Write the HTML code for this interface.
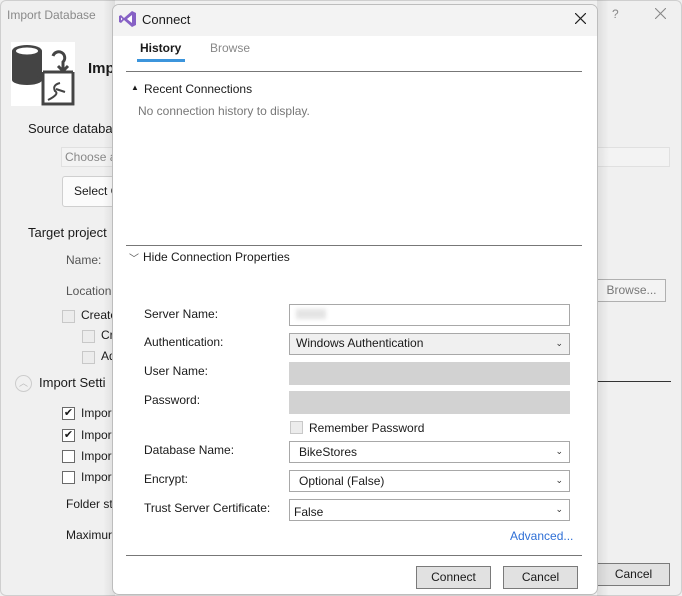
<!DOCTYPE html>
<html><head><meta charset="utf-8"><style>
*{margin:0;padding:0;box-sizing:border-box}
body{width:682px;height:596px;overflow:hidden;background:#f0f0f0;font-family:"Liberation Sans",sans-serif;font-size:12px;color:#1a1a1a;position:relative}
.a{position:absolute;white-space:nowrap}
.cb{position:absolute;width:13px;height:13px;border:1px solid #6a6a6a;background:#fff}
.cbd{border-color:#c8c8c8;background:#ececec}
.inp{position:absolute;border:1px solid #a8a8a8;background:#fff;height:22px;padding:3px 6px}
.chev{position:absolute;right:6px;top:4px;font-size:9px;color:#333}
.btn{position:absolute;border:1px solid #7a7a7a;background:#e1e1e1;text-align:center;line-height:20px}
</style></head><body>
<div class="a" style="left:0;top:0;width:682px;height:596px;border:1px solid #cfcfcf;border-radius:6px;background:#f0f0f0"></div>
<div class="a" style="left:7px;top:8px;color:#8a8a8a">Import Database</div>
<div class="a" style="left:612px;top:7px;color:#888">?</div>
<svg class="a" style="left:655px;top:8px" width="11" height="11"><path d="M0 0L11 11M11 0L0 11" stroke="#888" stroke-width="1.1"/></svg>
<div class="a" style="left:11px;top:42px;width:64px;height:64px;background:#fff">
<svg width="64" height="64"><rect x="1" y="9" width="30" height="29" fill="#444"/><ellipse cx="16" cy="38" rx="15" ry="5" fill="#444"/><ellipse cx="16" cy="9" rx="15" ry="6" fill="#444"/><ellipse cx="16" cy="9" rx="11" ry="3.5" fill="#fff"/><path d="M42 14 a6 6 0 1 1 10 6 v8 M47 24 l5 5 5-5" stroke="#444" stroke-width="3" fill="none"/><path d="M32 30 h30 M32 30 v32 h30 v-32" stroke="#444" stroke-width="3" fill="none"/><path d="M49 41 q-8 2 -5 8 q5 3 -7 9 M45 47 l9 3" stroke="#444" stroke-width="2" fill="none"/></svg></div>
<div class="a" style="left:88px;top:60px;font-weight:bold;font-size:15px">Impo</div>
<div class="a" style="left:28px;top:121px;font-size:13px">Source databa</div>
<div class="a" style="left:61px;top:147px;width:609px;height:20px;border:1px solid #e0e0e0;background:#f3f3f3;color:#888;padding:2px 3px">Choose a</div>
<div class="a" style="left:62px;top:176px;width:60px;height:31px;border:1px solid #cfcfcf;border-radius:3px;background:#fbfbfb;padding:7px 11px">Select C</div>
<div class="a" style="left:28px;top:225px;font-size:13px">Target project</div>
<div class="a" style="left:66px;top:253px;color:#555">Name:</div>
<div class="a" style="left:66px;top:284px;color:#555">Location</div>
<div class="btn" style="left:597px;top:279px;width:69px;height:23px;background:#f3f3f3;border-color:#b0b0b0;color:#777">Browse...</div>
<div class="cb cbd" style="left:62px;top:310px"></div><div class="a" style="left:81px;top:308px">Create</div>
<div class="cb cbd" style="left:82px;top:330px"></div><div class="a" style="left:101px;top:328px">Cr</div>
<div class="cb cbd" style="left:82px;top:351px"></div><div class="a" style="left:101px;top:349px">Ad</div>
<div class="a" style="left:15px;top:375px;width:17px;height:17px;border:1px solid #ccc;border-radius:50%;font-size:9px;color:#bbb;text-align:center;line-height:14px">︿</div>
<div class="a" style="left:39px;top:375px;font-size:13px">Import Setti</div>
<div class="a" style="left:597px;top:381px;width:74px;height:1px;background:#333"></div>
<div class="cb" style="left:62px;top:407px;font-size:11px;line-height:11px;text-align:center">✔</div><div class="a" style="left:81px;top:406px">Impor</div>
<div class="cb" style="left:62px;top:429px;font-size:11px;line-height:11px;text-align:center">✔</div><div class="a" style="left:81px;top:428px">Impor</div>
<div class="cb" style="left:62px;top:450px"></div><div class="a" style="left:81px;top:449px">Impor</div>
<div class="cb" style="left:62px;top:471px"></div><div class="a" style="left:81px;top:470px">Impor</div>
<div class="a" style="left:66px;top:497px">Folder st</div>
<div class="a" style="left:66px;top:528px">Maximur</div>
<div class="btn" style="left:597px;top:563px;width:73px;height:23px">Cancel</div>

<div class="a" style="left:103px;top:0;width:12px;height:596px;background:linear-gradient(90deg,rgba(0,0,0,0),rgba(0,0,0,.08))"></div>
<div class="a" style="left:597px;top:0;width:12px;height:596px;background:linear-gradient(90deg,rgba(0,0,0,.08),rgba(0,0,0,0))"></div>
<div class="a" style="left:112px;top:4px;width:486px;height:591px;background:#fff;border:1px solid #bdbdbd;border-radius:7px;overflow:hidden">
 <div class="a" style="left:0;top:0;width:486px;height:31px;background:#f3f3f3"></div>
</div>
<svg class="a" style="left:119px;top:10px" width="18" height="18" viewBox="0 0 18 18"><path d="M13 1 L17 3 V15 L13 17 L5 10 L2 13 L0 12 V6 L2 5 L5 8 Z" fill="#8661c5"/><path d="M13 5 V13 L8 9 Z" fill="#fff"/><path d="M2 7.5 V10.5 L3.5 9 Z" fill="#fff"/></svg>
<div class="a" style="left:142px;top:12px;font-size:13px">Connect</div>
<svg class="a" style="left:575px;top:13px" width="11" height="11"><path d="M0 0L11 11M11 0L0 11" stroke="#222" stroke-width="1.2"/></svg>
<div class="a" style="left:140px;top:41px;font-weight:bold">History</div>
<div class="a" style="left:137px;top:59px;width:48px;height:3px;background:#3c95dc"></div>
<div class="a" style="left:210px;top:41px;color:#888">Browse</div>
<div class="a" style="left:126px;top:71px;width:456px;height:1px;background:#777"></div>
<div class="a" style="left:131px;top:83px;font-size:8px">▲</div>
<div class="a" style="left:144px;top:82px">Recent Connections</div>
<div class="a" style="left:138px;top:104px;color:#777">No connection history to display.</div>
<div class="a" style="left:126px;top:245px;width:456px;height:1px;background:#777"></div>
<div class="a" style="left:129px;top:250px;font-size:10px;color:#555">﹀</div>
<div class="a" style="left:143px;top:250px">Hide Connection Properties</div>
<div class="a" style="left:144px;top:307px">Server Name:</div>
<div class="inp" style="left:289px;top:304px;width:281px"><span style="display:inline-block;width:30px;height:10px;background:#e4e4e4;filter:blur(2px)"></span></div>
<div class="a" style="left:144px;top:335px">Authentication:</div>
<div class="inp" style="left:289px;top:333px;width:281px;background:#f0f0f0;padding-top:2px">Windows Authentication<span class="chev">⌄</span></div>
<div class="a" style="left:144px;top:364px">User Name:</div>
<div class="a" style="left:289px;top:362px;width:281px;height:23px;background:#d2d2d2"></div>
<div class="a" style="left:144px;top:393px">Password:</div>
<div class="a" style="left:289px;top:391px;width:281px;height:23px;background:#d2d2d2"></div>
<div class="cb cbd" style="left:290px;top:421px"></div>
<div class="a" style="left:309px;top:421px">Remember Password</div>
<div class="a" style="left:144px;top:443px">Database Name:</div>
<div class="inp" style="left:289px;top:441px;width:281px;padding-left:9px">BikeStores<span class="chev">⌄</span></div>
<div class="a" style="left:144px;top:472px">Encrypt:</div>
<div class="inp" style="left:289px;top:470px;width:281px;padding-left:9px">Optional (False)<span class="chev">⌄</span></div>
<div class="a" style="left:144px;top:501px">Trust Server Certificate:</div>
<div class="inp" style="left:289px;top:499px;width:281px;padding-top:5px;padding-left:4px">False<span class="chev">⌄</span></div>
<div class="a" style="left:510px;top:529px;color:#2e6fd6">Advanced...</div>
<div class="a" style="left:126px;top:555px;width:456px;height:1px;background:#777"></div>
<div class="btn" style="left:416px;top:566px;width:75px;height:23px">Connect</div>
<div class="btn" style="left:503px;top:566px;width:75px;height:23px">Cancel</div>
</body></html>
